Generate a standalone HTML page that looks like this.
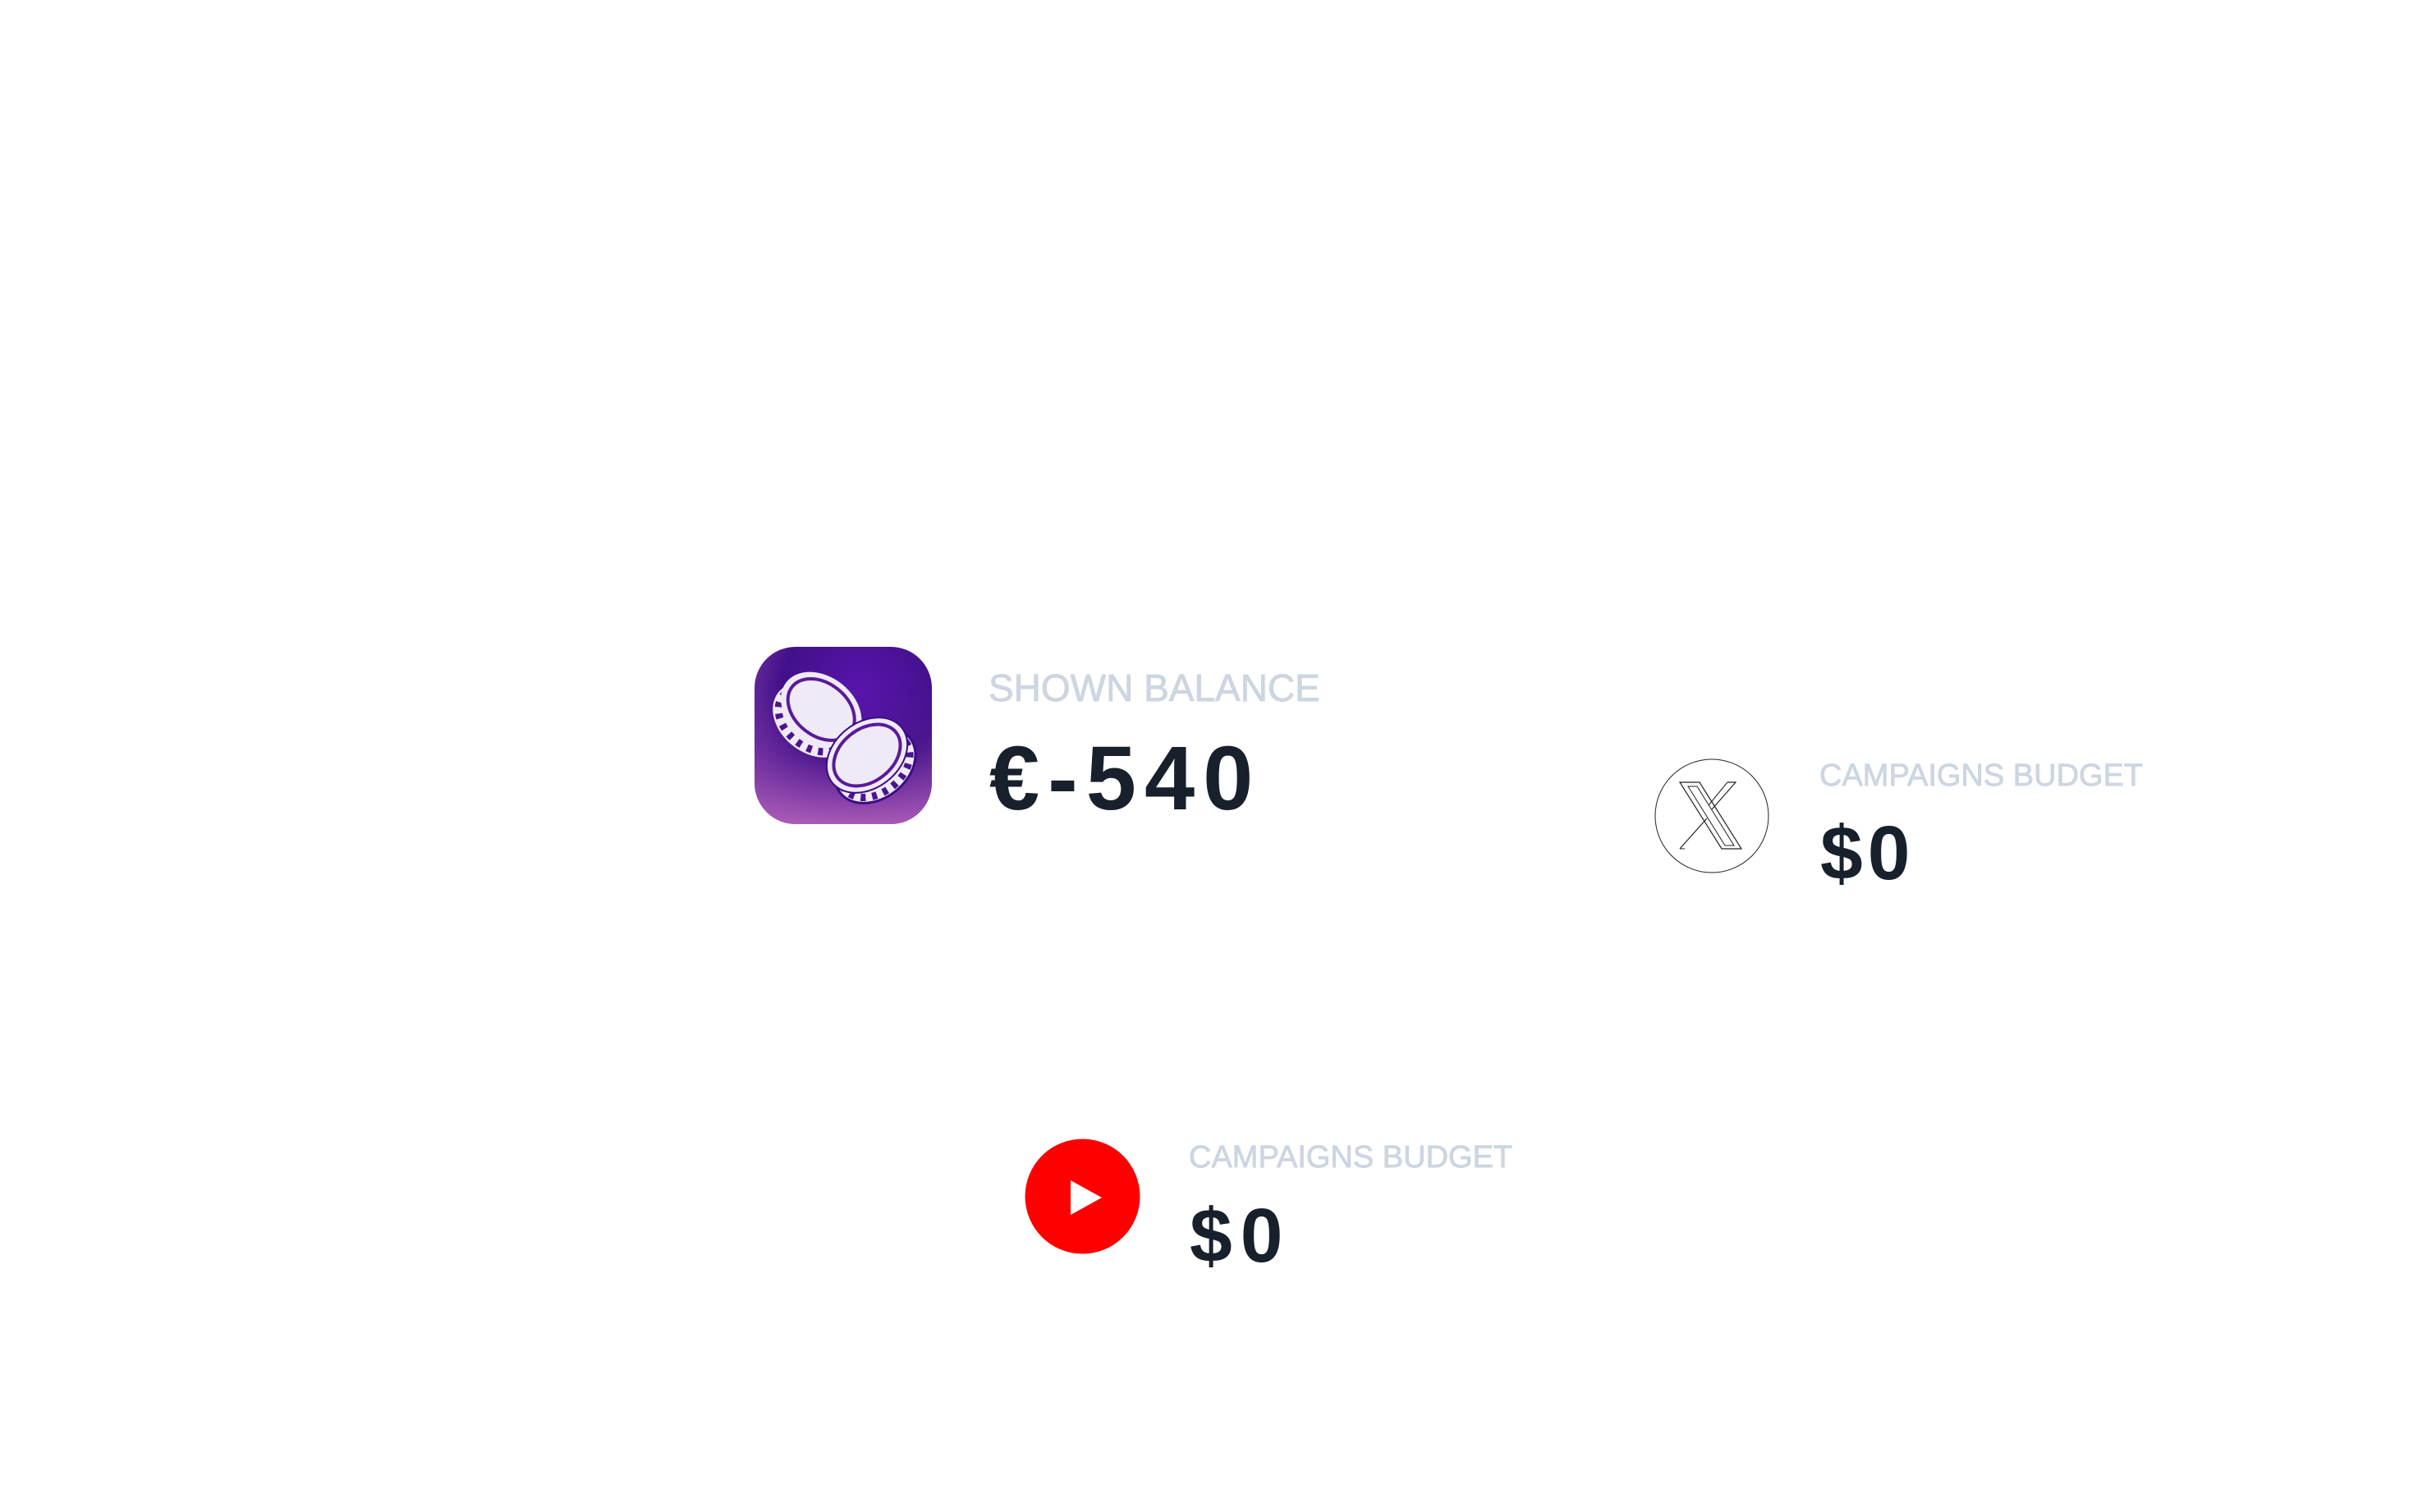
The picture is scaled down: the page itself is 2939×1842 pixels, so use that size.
<!DOCTYPE html>
<html><head><meta charset="utf-8"><style>
html,body{margin:0;padding:0;background:#fff;width:2939px;height:1842px;overflow:hidden;position:relative;font-family:"Liberation Sans",sans-serif}
.t{position:absolute;line-height:1;white-space:nowrap}
.lab{color:#cdd6e0;-webkit-text-stroke:0.9px #cdd6e0}
.val{color:#17202b;font-weight:bold}
</style></head><body>

<svg style="position:absolute;left:919px;top:788px" width="216" height="216" viewBox="0 0 216 216">
<defs>
<radialGradient id="g" cx="0.6" cy="0.25" r="0.9">
<stop offset="0" stop-color="#5a14b0"/>
<stop offset="0.5" stop-color="#42108a"/>
<stop offset="1" stop-color="#a054b8"/>
</radialGradient>
<linearGradient id="g2" x1="0" y1="0" x2="0" y2="1">
<stop offset="0" stop-color="#3a0c86" stop-opacity="0"/>
<stop offset="0.6" stop-color="#6a2a9a" stop-opacity="0.3"/>
<stop offset="1" stop-color="#b060b8" stop-opacity="0.8"/>
</linearGradient>
</defs>
<rect x="0" y="0" width="216" height="216" rx="50" fill="url(#g)"/>
<rect x="0" y="0" width="216" height="216" rx="50" fill="url(#g2)"/>
<g transform="rotate(38 80 78)">
<ellipse cx="80" cy="92" rx="54" ry="40" fill="#efeaf5"/>
<ellipse cx="80" cy="92" rx="47" ry="33" fill="none" stroke="#4a1490" stroke-width="9" stroke-dasharray="6 8"/>
<ellipse cx="80" cy="76" rx="54" ry="40" fill="#efeaf5"/>
<ellipse cx="80" cy="76" rx="45" ry="32" fill="none" stroke="#5a1a9a" stroke-width="4"/>
</g>
<g transform="rotate(-38 137 132)">
<ellipse cx="137" cy="148" rx="54" ry="40" fill="#efeaf5" stroke="#3a0c86" stroke-width="3"/>
<ellipse cx="137" cy="148" rx="47" ry="33" fill="none" stroke="#4a1490" stroke-width="9" stroke-dasharray="6 8"/>
<ellipse cx="137" cy="132" rx="54" ry="40" fill="#efeaf5" stroke="#3a0c86" stroke-width="2"/>
<ellipse cx="137" cy="132" rx="45" ry="32" fill="none" stroke="#5a1a9a" stroke-width="4"/>
</g>
</svg>

<div class="t lab" style="left:1204px;top:815px;font-size:46px">SHOWN BALANCE</div>
<div class="t val" style="left:1205px;top:894px;font-size:110px;letter-spacing:10px">€-540</div>

<svg style="position:absolute;left:2015px;top:924px" width="140" height="140" viewBox="0 0 140 140">
<circle cx="70" cy="70" r="69" fill="#fff" stroke="#222" stroke-width="1"/>
<path d="M31 29 H55 L106 110 H82 Z" fill="#fff" stroke="#222" stroke-width="1.2"/>
<path d="M41 34 H52 L97 106 H86 Z" fill="none" stroke="#222" stroke-width="1"/>
<path d="M31 110 L64 73 M89 29 H99 L70 62" fill="none" stroke="#222" stroke-width="1.2"/>
<path d="M37 110 H31 M89 29 L66 57" fill="none" stroke="#222" stroke-width="1"/>
</svg>
<div class="t lab" style="left:2216px;top:926px;font-size:38px">CAMPAIGNS BUDGET</div>
<div class="t val" style="left:2217px;top:993px;font-size:93px;letter-spacing:6px">$0</div>

<svg style="position:absolute;left:1248px;top:1387px" width="141" height="141" viewBox="0 0 141 141">
<circle cx="70.5" cy="70.5" r="70" fill="#ff0000"/>
<path d="M56 51 L94 72 L56 93 Z" fill="#fff"/>
</svg>
<div class="t lab" style="left:1448px;top:1391px;font-size:38px">CAMPAIGNS BUDGET</div>
<div class="t val" style="left:1449px;top:1459px;font-size:93px;letter-spacing:10px">$0</div>

</body></html>
